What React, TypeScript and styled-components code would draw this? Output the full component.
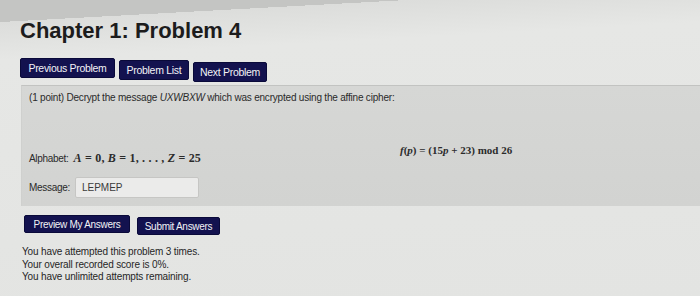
import React from "react";
import styled, { createGlobalStyle } from "styled-components";

const Global = createGlobalStyle`
  html, body { margin: 0; padding: 0; }
  body {
    width: 700px;
    height: 296px;
    overflow: hidden;
    font-family: "Liberation Sans", Arial, sans-serif;
    color: #262626;
    background: linear-gradient(176.9deg, #c4c5c3 0 22px, #dcdddb 22px, #e6e7e5 60px, #e3e4e2 100%);
  }
`;

const Page = styled.div`
  padding: 17px 0 0 20px;
  display: flex;
  flex-direction: column;
`;

const Title = styled.h1`
  margin: 0;
  font-size: 22px;
  font-weight: 700;
  color: #1c1c1c;
  line-height: 27px;
  letter-spacing: 0px;
`;

const NavRow = styled.div`
  display: flex;
  gap: 4px;
  margin-top: 14px;
`;

const NavButton = styled.button<{ $w: number; $dy?: number }>`
  width: ${(p) => p.$w}px;
  height: 20px;
  padding: 0;
  border: 1px solid #0a0a3a;
  border-radius: 2px;
  background: #13124f;
  color: #f2f2f6;
  font-family: "Liberation Sans", Arial, sans-serif;
  font-size: 10.5px;
  letter-spacing: -0.3px;
  margin-top: ${(p) => p.$dy ?? 0}px;
`;

const Panel = styled.section`
  margin-top: 3px;
  margin-left: 1px;
  border-top: 1px solid #c2c3c1;
  border-left: 1px solid #cfd0ce;
  background: linear-gradient(180deg, #d6d7d5, #d2d3d1);
  padding: 5px 7px 8px 7px;
  display: flex;
  flex-direction: column;
  font-size: 10px;
  color: #2a2a2a;
`;

const Question = styled.div`
  line-height: 14px;
  letter-spacing: -0.2px;
`;

const Em = styled.i``;

const Display = styled.div`
  margin-top: 38px;
  padding-left: 371px;
  line-height: 14px;
`;

const Math = styled.span`
  font-family: "Liberation Serif", "DejaVu Serif", serif;
  font-size: 11px;
  font-weight: 700;
  color: #2b2b2b;
`;

const AlphaMath = styled(Math)`
  font-size: 12px;
  letter-spacing: 0.2px;
`;

const Var = styled.i`
  font-family: "Liberation Serif", "DejaVu Serif", serif;
`;

const AlphaLine = styled.div`
  margin-top: -7px;
  line-height: 14px;
  display: flex;
  align-items: baseline;
  gap: 5px;
  letter-spacing: -0.3px;
`;

const MessageRow = styled.div`
  margin-top: 11px;
  display: flex;
  align-items: center;
  gap: 5px;
  letter-spacing: -0.3px;
`;

const Input = styled.div`
  width: 124px;
  height: 21px;
  box-sizing: border-box;
  border: 1px solid #c6c6c4;
  border-radius: 2px;
  background: #ebebea;
  padding: 0 6px;
  display: flex;
  align-items: center;
  font-size: 10px;
  letter-spacing: 0;
  color: #3a3a3a;
`;

const SubmitRow = styled.div`
  display: flex;
  gap: 7px;
  margin-top: 9px;
  padding-left: 4px;
`;

const ActionButton = styled(NavButton)`
  height: 18px;
  font-size: 10px;
`;

const Status = styled.div`
  margin-top: 11px;
  padding-left: 2px;
  font-size: 10px;
  line-height: 12.5px;
  color: #262626;
  letter-spacing: -0.15px;
`;

export default function App() {
  return (
    <>
      <Global />
      <Page>
        <Title>Chapter 1: Problem 4</Title>
        <NavRow>
          <NavButton $w={95}>Previous Problem</NavButton>
          <NavButton $w={70} $dy={2}>Problem List</NavButton>
          <NavButton $w={74} $dy={4}>Next Problem</NavButton>
        </NavRow>
        <Panel>
          <Question>
            (1 point) Decrypt the message <Em>UXWBXW</Em> which was encrypted using the affine cipher:
          </Question>
          <Display>
            <Math>
              <Var>f</Var>(<Var>p</Var>) = (15<Var>p</Var> + 23) mod 26
            </Math>
          </Display>
          <AlphaLine>
            <span>Alphabet:</span>
            <AlphaMath>
              <Var>A</Var> = 0, <Var>B</Var> = 1, . . . , <Var>Z</Var> = 25
            </AlphaMath>
          </AlphaLine>
          <MessageRow>
            <span>Message:</span>
            <Input>LEPMEP</Input>
          </MessageRow>
        </Panel>
        <SubmitRow>
          <ActionButton $w={106}>Preview My Answers</ActionButton>
          <ActionButton $w={83} $dy={2}>Submit Answers</ActionButton>
        </SubmitRow>
        <Status>
          You have attempted this problem 3 times.
          <br />
          Your overall recorded score is 0%.
          <br />
          You have unlimited attempts remaining.
        </Status>
      </Page>
    </>
  );
}
